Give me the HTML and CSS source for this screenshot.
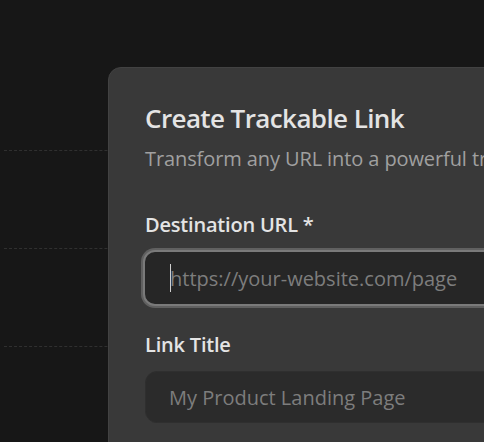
FILE: index.html
```html
<!DOCTYPE html>
<html lang="en">
<head>
    <meta charset="UTF-8" />
    <meta name="viewport" content="width=device-width, initial-scale=1" />
    <title>Create Trackable Link</title>
    <link rel="stylesheet" href="styles.css">
</head>
<body>

<!-- page behind the modal -->
<div class="backdrop">
    <div class="grid-row first"></div>
    <div class="grid-row"></div>
    <div class="grid-row"></div>
    <div class="grid-row"></div>
</div>

<!-- modal -->
<div class="modal">
    <h2>Create Trackable Link</h2>
    <p class="subtitle">Transform any URL into a powerful tracking link</p>

    <form class="link-form" onsubmit="event.preventDefault();">
        <div class="field">
            <label for="url">Destination URL *</label>
            <div class="input-wrap">
                <input type="url" id="url" class="focused" placeholder="https://your-website.com/page" />
                <span class="caret"></span>
            </div>
        </div>

        <div class="field">
            <label for="title">Link Title</label>
            <input type="text" id="title" placeholder="My Product Landing Page" />
        </div>
    </form>
</div>

</body>
</html>
```

FILE: styles.css
```css
body {
    font-family: "Open Sans", "Noto Sans", sans-serif;
    background-color: #171717;
    margin: 0;
    height: 100vh;
    overflow: hidden;
    position: relative;
}

.backdrop {
    display: flex;
    flex-direction: column;
    padding: 0 0 0 4px;
}
.grid-row {
    height: 97px;
    border-bottom: 1px dashed #303030;
}
.grid-row.first {
    height: 150px;
}

.modal {
    position: absolute;
    top: 67px;
    left: 108px;
    width: 560px;
    height: 420px;
    background: #393939;
    border: 1px solid #424242;
    border-radius: 13px;
    padding: 32px 36px;
    box-sizing: border-box;
    overflow: hidden;
}
h2 {
    margin: 0;
    font-size: 26px;
    font-weight: 600;
    color: #e4e4e4;
    line-height: 36px;
    letter-spacing: -0.6px;
}
.subtitle {
    margin: 9px 0 0;
    font-size: 20px;
    color: #a0a0a0;
    line-height: 28px;
    white-space: nowrap;
    letter-spacing: -0.1px;
}
.link-form {
    display: flex;
    flex-direction: column;
    gap: 25px;
    margin-top: 38px;
}
.field {
    display: flex;
    flex-direction: column;
    gap: 12px;
}
label {
    font-size: 20px;
    font-weight: 600;
    color: #e4e4e4;
    line-height: 28px;
    letter-spacing: -0.2px;
}
input {
    font-family: inherit;
    font-size: 20px;
    height: 52px;
    padding: 0 23px;
    background: #2b2b2b;
    border: 1px solid #2f2f2f;
    border-radius: 12px;
    color: #ddd;
    box-sizing: border-box;
    outline: none;
}
input::placeholder {
    color: #7d7d7d;
}
.input-wrap {
    position: relative;
    display: flex;
    flex-direction: column;
    margin: -1px 0 0 -2px;
}
input.focused {
    height: 56px;
    background: #262626;
    border: 2px solid #7a7a7a;
    box-shadow: 0 0 0 2px #606060;
    padding-left: 25px;
}
.caret {
    position: absolute;
    left: 27px;
    top: 14px;
    width: 1px;
    height: 28px;
    background: #cfcfcf;
}
```
